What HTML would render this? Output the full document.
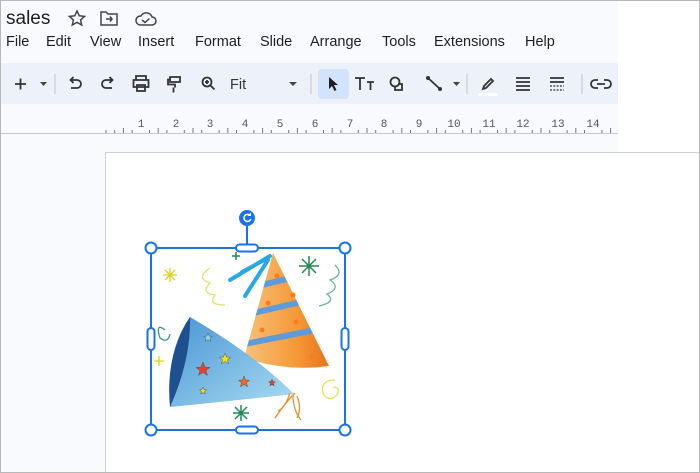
<!DOCTYPE html>
<html><head><meta charset="utf-8">
<style>
*{margin:0;padding:0;box-sizing:border-box}
html,body{width:700px;height:473px;overflow:hidden}
body{background:#fff;font-family:"Liberation Sans",sans-serif;position:relative}
.frame{position:absolute;left:0;top:0;width:700px;height:473px;border:1px solid #b8b8b8;z-index:10;pointer-events:none}
.hdr{position:absolute;left:0;top:0;width:618px;height:152px;background:#f8fafd}
.tb{position:absolute;left:0;top:63px;width:618px;height:41px;background:#edf2fa}
.title{position:absolute;left:6px;top:8px;font-size:19px;color:#1f1f1f}
.menu{position:absolute;top:34px;font-size:14.5px;color:#1f1f1f}
.slide{position:absolute;left:105px;top:152px;width:595px;height:321px;background:#fff;border-left:1px solid #d0d0d0;border-top:1px solid #d0d0d0}
.leftpane{position:absolute;left:0;top:134px;width:105px;height:339px;background:#f8fafd}
.ln{position:absolute;left:0;top:133px;width:618px;height:1px;background:#c8c8c8}
</style></head><body>
<div class="hdr"></div>
<div class="leftpane"></div>
<div class="ln"></div>
<div class="tb"></div>
<div class="title">sales</div>
<svg style="position:absolute;left:0;top:0" width="700" height="140">
 <g fill="none" stroke="#444" stroke-width="1.5">
  <path d="M77 11 l2.3 4.8 5.2.6-3.9 3.5 1.1 5.1-4.7-2.6-4.7 2.6 1.1-5.1-3.9-3.5 5.2-.6z"/>
  <path d="M101 12h5l2 2h9v11h-16z"/><path d="M106 19h6M110 16.5l2 2.5-2 2.5"/>
  <path d="M140 25h12a4 4 0 0 0 0-8 6 6 0 0 0-11-1 4.5 4.5 0 0 0-1 9z"/><path d="M142 20l3 2.5 4.5-4"/>
 </g>
 <g fill="none" stroke="#333" stroke-width="1.8">
  <path d="M15 84h11M20.5 78.5v11"/>
  <path d="M71 80h6a4 4 0 0 1 0 8h-6M73.5 77l-3 3 3 3"/>
  <path d="M112 80h-6a4 4 0 0 0 0 8h6M109.5 77l3 3-3 3"/>
  <path d="M136 80v-4h10v4M133.5 80h15v7h-15zM137 85h8v6h-8z"/>
  <path d="M170 77h10v5h-10zM170 79.5h-2v5h7v3M173.5 87.5v5"/>
  <circle cx="207" cy="82" r="4.5"/><path d="M210.5 85.5l4 4M205 82h4M207 80v4"/>
  <path d="M355 78h10M360 78v12M367 82h7M370.5 82v8"/>
  <circle cx="395" cy="82" r="4.5"/><path d="M398 84h4v6h-7v-3"/>
  <path d="M428 78l12 11"/>
  <path d="M483 89l1-3 7-7 2 2-7 7z"/>
  <path d="M516 78h14M516 82h14M516 86h14M516 90h14"/>
  <path d="M550 78h14M550 82h14" /><path d="M550 86h14M550 90h14" stroke-dasharray="2 1.3" stroke-width="1.2"/>
  <path d="M598 80h-3a4 4 0 0 0 0 8h3M604 80h3a4 4 0 0 1 0 8h-3M597 84h8"/>
 </g>
 <circle cx="428" cy="78" r="2" fill="#333"/><circle cx="440" cy="89" r="2" fill="#333"/>
 <rect x="478" y="93" width="20" height="3" fill="#fff"/>
 <g fill="#444"><path d="M40 82h7l-3.5 4z"/><path d="M289 82h8l-4 4z"/><path d="M453 82h7l-3.5 4z"/></g>
 <g stroke="#c4c7c5" stroke-width="1"><path d="M55 74v20M311 74v20M467 74v20M582 74v20"/></g>
 <rect x="318" y="69" width="31" height="30" rx="4" fill="#d3e3fd"/>
 <path d="M329 77v12l3-3 2.5 5 2-1-2.5-5h4z" fill="#1f1f1f"/>
 <text x="230" y="89" font-size="14.5" fill="#333" font-family="Liberation Sans">Fit</text>
</svg>
<div class="menu" style="left:6px">File</div>
<div class="menu" style="left:46px">Edit</div>
<div class="menu" style="left:90px">View</div>
<div class="menu" style="left:138px">Insert</div>
<div class="menu" style="left:195px">Format</div>
<div class="menu" style="left:260px">Slide</div>
<div class="menu" style="left:310px">Arrange</div>
<div class="menu" style="left:382px">Tools</div>
<div class="menu" style="left:434px">Extensions</div>
<div class="menu" style="left:525px">Help</div>
<svg style="position:absolute;left:0;top:110px" width="618" height="24">
 <g stroke="#777" stroke-width="1">
  <path d="M106 23v-3M114.7 23v-3M123.4 23v-5M132.1 23v-3M149.5 23v-3M158.2 23v-5M166.9 23v-3M184.3 23v-3M193 23v-5M201.7 23v-3M219.1 23v-3M227.8 23v-5M236.5 23v-3M253.9 23v-3M262.6 23v-5M271.3 23v-3M288.7 23v-3M297.4 23v-5M306.1 23v-3M323.5 23v-3M332.2 23v-5M340.9 23v-3M358.3 23v-3M367 23v-5M375.7 23v-3M393.1 23v-3M401.8 23v-5M410.5 23v-3M427.9 23v-3M436.6 23v-5M445.3 23v-3M462.7 23v-3M471.4 23v-5M480.1 23v-3M497.5 23v-3M506.2 23v-5M514.9 23v-3M532.3 23v-3M541 23v-5M549.7 23v-3M567.1 23v-3M575.8 23v-5M584.5 23v-3M601.9 23v-3M610.6 23v-5"/>
 </g>
 <g font-family="Liberation Mono" font-size="11" fill="#555" text-anchor="middle">
  <text x="141" y="17">1</text><text x="176" y="17">2</text><text x="210" y="17">3</text><text x="245" y="17">4</text><text x="280" y="17">5</text><text x="315" y="17">6</text><text x="350" y="17">7</text><text x="384" y="17">8</text><text x="419" y="17">9</text><text x="454" y="17">10</text><text x="489" y="17">11</text><text x="523" y="17">12</text><text x="558" y="17">13</text><text x="593" y="17">14</text>
 </g>
</svg>
<div class="slide"></div>
<svg style="position:absolute;left:0;top:0" width="700" height="473">
 <defs>
  <linearGradient id="og" x1="0" x2="1"><stop offset="0" stop-color="#f7c27a"/><stop offset=".6" stop-color="#f59a3a"/><stop offset="1" stop-color="#e8741a"/></linearGradient>
  <linearGradient id="bg" x1="0" y1="0" x2="1" y2="1"><stop offset="0" stop-color="#4a95d4"/><stop offset="1" stop-color="#a8dcf2"/></linearGradient>
  <clipPath id="oc"><path d="M273 253L244 358Q286 372 329 366Z"/></clipPath>
 </defs>
 <path d="M273 253L244 358Q286 372 329 366Z" fill="url(#og)"/>
 <g clip-path="url(#oc)" stroke="#5e9bd8" stroke-width="6" fill="none"><path d="M240 290l60 -14M240 316l70 -16M240 345l80 -16"/></g>
 <g fill="#ff7a1a"><circle cx="277" cy="276" r="2.5"/><circle cx="268" cy="303" r="2.5"/><circle cx="293" cy="295" r="2.5"/><circle cx="262" cy="330" r="2.5"/><circle cx="296" cy="322" r="2.5"/><circle cx="312" cy="357" r="2.5"/></g>
 <g stroke="#29a8e8" stroke-width="4" stroke-linecap="round"><path d="M270 256L230 280M268 258L242 272M268 260L245 296"/></g>
 <path d="M190 317Q255 355 294 394Q230 401 170 407Q166 350 190 317Z" fill="url(#bg)"/>
 <path d="M190 317Q165 355 170 407Q191 360 190 317Z" fill="#1e4f8e"/>
 <g stroke="#555" stroke-width=".5">
  <path d="M203 362l2 5 5 .5-4 3 1.5 5-4.5-3-4.5 3 1.5-5-4-3 5-.5z" fill="#e8402a"/>
  <path d="M225 353l1.5 4 4 .3-3 2.5 1 4-3.5-2.3-3.5 2.3 1-4-3-2.5 4-.3z" fill="#f0e020"/>
  <path d="M244 376l1.5 4 4 .3-3 2.5 1 4-3.5-2.3-3.5 2.3 1-4-3-2.5 4-.3z" fill="#f06a20"/>
  <path d="M208 333l1.2 3 3 .3-2.3 2 .8 3-2.7-1.6-2.7 1.6.8-3-2.3-2 3-.3z" fill="#8fd4f0"/>
  <path d="M272 379l1 2.5 2.5.3-2 1.7.7 2.5-2.2-1.4-2.2 1.4.7-2.5-2-1.7 2.5-.3z" fill="#e8402a"/>
  <path d="M203 387l1 2.5 2.5.3-2 1.7.7 2.5-2.2-1.4-2.2 1.4.7-2.5-2-1.7 2.5-.3z" fill="#f0e020"/>
 </g>
 <g stroke="#1e8a50" stroke-width="1.5"><path d="M309 256v20M299 266h20M302 259l14 14M316 259l-14 14"/><path d="M241 405v16M233 413h16M235 407l12 12M247 407l-12 12"/><path d="M236 252v8M232 256h8"/></g>
 <g stroke="#e0d020" stroke-width="1.3"><path d="M170 268v14M163 275h14M165 270l10 10M175 270l-10 10"/><path d="M159 356v10M154 361h10"/></g>
 <g fill="none" stroke-width="1.3">
  <path d="M210 268q-15 10 0 15q-10 10 5 12q-8 10 10 10" stroke="#e8e06a"/>
  <path d="M335 265q10 10-5 15q12 8-3 14q10 8-8 12" stroke="#66b89a"/>
  <path d="M165 330q-10-8-5 8q8 6 10-4" stroke="#3a9a78"/>
  <path d="M335 380q-15 0-12 13q5 10 14 2q4-8-4-8" stroke="#e8e04a"/>
  <path d="M295 393q-10 10-20 25M293 395q0 15 8 25M290 393q-5 15-12 18M297 396q5 12 0 22" stroke="#e89030"/>
 </g>
 <g stroke="#1a73e8" fill="none">
  <rect x="151" y="248" width="194" height="182" stroke-width="2"/>
  <path d="M247 248v-22" stroke-width="2"/>
  <g fill="#fff" stroke-width="2">
   <circle cx="151" cy="248" r="5.5"/><circle cx="345" cy="248" r="5.5"/><circle cx="151" cy="430" r="5.5"/><circle cx="345" cy="430" r="5.5"/>
   <rect x="236" y="244.5" width="22" height="7" rx="3.5"/><rect x="236" y="426.5" width="22" height="7" rx="3.5"/>
   <rect x="147.5" y="328" width="7" height="22" rx="3.5"/><rect x="341.5" y="328" width="7" height="22" rx="3.5"/>
  </g>
 </g>
 <circle cx="247" cy="218" r="8" fill="#1a73e8"/>
 <path d="M250 215.5a3.5 3.5 0 1 0 .8 3.5" stroke="#fff" stroke-width="1.5" fill="none"/><path d="M251 212.5v3.5h-3.5z" fill="#fff"/>
</svg>
<div class="frame"></div>
</body></html>
